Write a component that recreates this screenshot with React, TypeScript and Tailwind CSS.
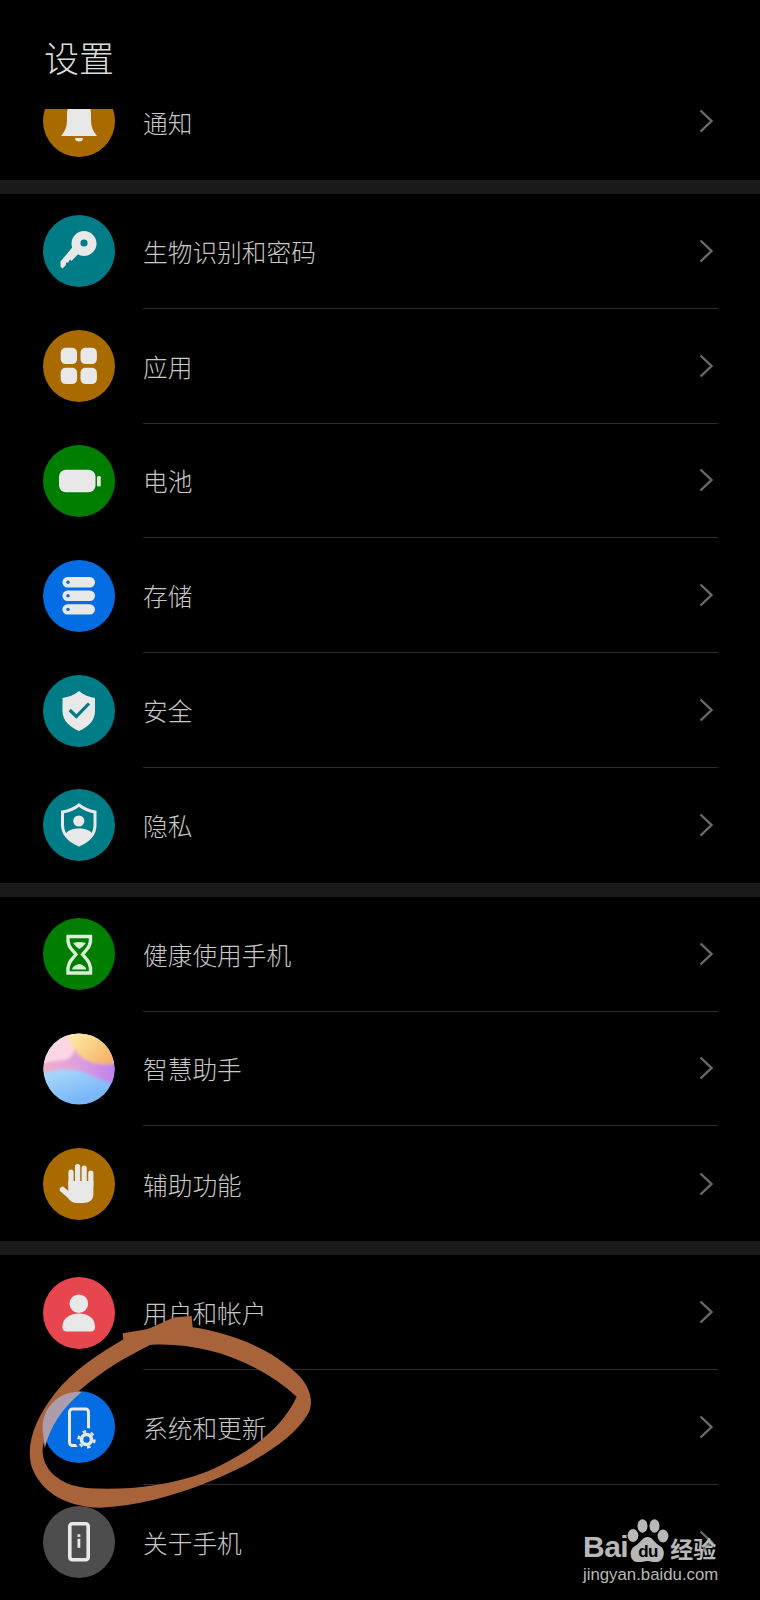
import React from "react";

const ICON = "#e8e8e8";
const TEAL = "#007c87";
const AMBER = "#a96a00";
const GREEN = "#007e00";
const BLUE = "#056de3";

const Svg = ({ children }: { children: React.ReactNode }) => (
  <svg viewBox="0 0 72 72" className="block w-[72px] h-[72px]">
    {children}
  </svg>
);

const Bell = () => (
  <Svg>
    <path fill={ICON} d="M18 51 Q24 44 24 36 V30 Q24 16 36 16 Q48 16 48 30 V36 Q48 44 54 51 Z" />
    <path fill={ICON} d="M32 53 h8 a4 3.5 0 0 1 -8 0 Z" />
  </Svg>
);

const Key = () => (
  <Svg>
    <path fill={ICON} d="M33 28 L39 35 L28.5 46 L27 44.5 L25 48 L23.5 47 L22.5 50.5 L19.5 53.5 L17.5 51.5 L17.5 46.5 Z" />
    <circle cx="41" cy="28.5" r="12.5" fill={ICON} />
    <circle cx="41" cy="28" r="3.6" fill={TEAL} />
  </Svg>
);

const Grid = () => (
  <Svg>
    <rect x="17.7" y="17.7" width="16.4" height="16.4" rx="5" fill={ICON} />
    <rect x="37.5" y="17.7" width="16.4" height="16.4" rx="5" fill={ICON} />
    <rect x="17.7" y="37.7" width="16.4" height="16.4" rx="5" fill={ICON} />
    <rect x="37.5" y="37.7" width="16.4" height="16.4" rx="5" fill={ICON} />
  </Svg>
);

const Battery = () => (
  <Svg>
    <rect x="16" y="24.7" width="36.5" height="22.6" rx="7" fill={ICON} />
    <rect x="54" y="31" width="3.8" height="10.4" rx="1.5" fill={ICON} />
  </Svg>
);

const Storage = () => (
  <Svg>
    {[17, 30.6, 44.2].map((y) => (
      <g key={y}>
        <rect x="19.4" y={y} width="32.6" height="10.4" rx="5.2" fill={ICON} />
        <circle cx="25" cy={y + 5.2} r="1.7" fill={BLUE} />
      </g>
    ))}
  </Svg>
);

const SHIELD = "M36 16 C41 20 46 22 52 23 V36 C52 46 45 52 36 56 C27 52 19.5 46 19.5 36 V23 C26 22 31 20 36 16 Z";

const ShieldCheck = () => (
  <Svg>
    <path d={SHIELD} fill={ICON} />
    <path d="M26.7 35 L33.3 41.5 L46 28.5" fill="none" stroke={TEAL} strokeWidth="3.2" />
  </Svg>
);

const ShieldUser = () => (
  <Svg>
    <path d={SHIELD} fill={TEAL} stroke={ICON} strokeWidth="3" />
    <circle cx="35.8" cy="32" r="5.6" fill={ICON} />
    <path d="M22 46 C24 41 30 39.5 36 39.5 C42 39.5 48 41 50 46 C47 51 42 54 36 56 C30 54 25 51 22 46 Z" fill={ICON} />
  </Svg>
);

const Hourglass = () => (
  <Svg>
    <path
      d="M25 18.5 H47.5 C48.5 28 44 31 39.5 36.5 C44 42 48.5 45 47.5 55 H25 C24 45 28.5 42 33 36.5 C28.5 31 24 28 25 18.5 Z"
      fill="none"
      stroke="#d9f0d9"
      strokeWidth="3.4"
    />
    <path d="M30 25 Q36 23 43 25 Q40 29 36.3 31 Q33 29 30 25 Z" fill="#d9f0d9" />
    <path d="M29 51.5 Q30 47 36.3 46 Q42 47 43.5 51.5 Z" fill="#d9f0d9" />
  </Svg>
);

const Assistant = () => (
  <Svg>
    <defs>
      <clipPath id="orb">
        <circle cx="36" cy="36" r="35.6" />
      </clipPath>
      <filter id="soft" x="-10%" y="-10%" width="120%" height="120%">
        <feGaussianBlur stdDeviation="1.4" />
      </filter>
      <linearGradient id="orbBlue" x1="0" y1="0" x2="0.3" y2="1">
        <stop offset="0.4" stopColor="#b4e0fb" />
        <stop offset="1" stopColor="#7ab6f8" />
      </linearGradient>
      <linearGradient id="orbWave" x1="0" y1="0" x2="1" y2="0">
        <stop offset="0" stopColor="#f2aec8" />
        <stop offset="0.5" stopColor="#dc9fdc" />
        <stop offset="1" stopColor="#bb80f2" />
      </linearGradient>
      <linearGradient id="orbTop" x1="0" y1="0" x2="1" y2="0.7">
        <stop offset="0" stopColor="#fdf2ac" />
        <stop offset="1" stopColor="#f6b268" />
      </linearGradient>
    </defs>
    <g clipPath="url(#orb)">
      <rect width="72" height="72" fill="url(#orbBlue)" />
      <g filter="url(#soft)">
        <path d="M-2 -2 H74 V50 C62 50 52 44 38 38.5 C26 35 12 36 -2 41 Z" fill="url(#orbWave)" />
        <path d="M-2 -2 H34 C34 12 32 24 22 27 C14 28 6 27 -2 32 Z" fill="#fcd6e4" />
        <path d="M24 -2 H74 V30 C62 33 46 31 37 23 C30 16 26 8 24 -2 Z" fill="url(#orbTop)" />
      </g>
    </g>
  </Svg>
);

const Hand = () => (
  <Svg>
    <g stroke={ICON} strokeWidth="5.2" strokeLinecap="round" fill="none">
      <path d="M28 36 V24" />
      <path d="M34.6 36 V18.6" />
      <path d="M41.2 36 V20" />
      <path d="M47.8 38 V25" />
      <path d="M19.5 41.5 L28 49" strokeWidth="5.6" />
    </g>
    <path d="M25.4 33 H50.4 V46 C50.4 52 46 55 40 55 H34 C30 55 27 53 25 50 Z" fill={ICON} />
  </Svg>
);

const User = () => (
  <Svg>
    <circle cx="35.8" cy="26.7" r="9.3" fill={ICON} />
    <path d="M19.4 50 C19.4 41 27 36.5 36 36.5 C45 36.5 52 41 52 50 C52 53 50.5 54.5 47.5 54.5 H24 C21 54.5 19.4 53 19.4 50 Z" fill={ICON} />
  </Svg>
);

const PhoneGear = () => (
  <Svg>
    <rect x="26.5" y="18" width="19" height="36.5" rx="3" fill="none" stroke={ICON} strokeWidth="3" />
    <circle cx="43.5" cy="48.5" r="11.5" fill={BLUE} />
    <circle cx="43.5" cy="48.5" r="5" fill="none" stroke={ICON} strokeWidth="3.6" />
    <circle cx="43.5" cy="48.5" r="8" fill="none" stroke={ICON} strokeWidth="2.4" strokeDasharray="3.6 4.78" />
  </Svg>
);

const PhoneInfo = () => (
  <Svg>
    <rect x="26.8" y="17.8" width="18.4" height="36" rx="2.5" fill="none" stroke={ICON} strokeWidth="3.6" />
    <rect x="34.5" y="28.3" width="2.8" height="2.6" fill={ICON} />
    <rect x="34.5" y="32.8" width="2.8" height="9" fill={ICON} />
  </Svg>
);

const Chevron = () => (
  <svg viewBox="0 0 14 24" className="block w-[14px] h-[24px]">
    <path d="M1.5 1.5 L12.5 12 L1.5 22.5" fill="none" stroke="#6a6a6a" strokeWidth="2.4" />
  </svg>
);

type RowProps = {
  label: string;
  color: string;
  icon: React.ReactNode;
  last?: boolean;
};

const Row: React.FC<RowProps> = ({ label, color, icon, last }) => (
  <div className="flex items-center h-[114.8px] pl-[43px]">
    <div className="w-[72px] h-[72px] rounded-full shrink-0" style={{ backgroundColor: color }}>
      {icon}
    </div>
    <div
      className={`flex-1 self-stretch ml-[28px] mr-[42px] flex items-center justify-between pr-[5px] ${
        last ? "" : "border-b border-[#2c2c2c]"
      }`}
    >
      <span className="text-[24.7px] leading-[32px] font-light text-[#c8c8c8]">{label}</span>
      <Chevron />
    </div>
  </div>
);

const Gap = () => <div className="h-[14px] bg-[#1a1a1a]" />;

// hand-drawn ring somebody put on top of the screenshot
const Annotation = () => (
  <svg viewBox="0 0 1140 1080" className="absolute left-0 top-[1240px] w-[380px] h-[360px]">
    <path
      fill="#a9633a"
      fillRule="evenodd"
      d="M575 228 L578 262 C700 280 820 330 900 410 C935 450 940 490 925 520 C880 600 760 670 640 720 C520 770 400 800 300 803 C190 800 120 750 95 680 C75 610 110 530 165 460 C220 390 300 340 370 298 L368 280 L440 268 C470 258 500 240 525 232 Z M450 315 C600 305 770 360 890 470 C850 560 750 640 620 695 C500 740 380 750 270 745 C190 740 135 700 128 640 C125 590 170 510 240 450 C310 390 380 350 450 315 Z"
    />
    <path fill="#ad9cab" d="M245 456 A107 107 0 0 0 130 585 L134 625 C150 560 190 500 245 456 Z" />
  </svg>
);

const Watermark = () => (
  <div className="absolute left-[583px] top-[1517px] w-[140px] text-[#b8b8b8]">
    <div className="flex items-end h-[47px]">
      <span className="font-['Liberation_Sans',sans-serif] font-bold text-[30px] leading-[30px] tracking-[-0.5px] mb-[2px]">
        Bai
      </span>
      <div className="relative w-[42px] h-[46px] -ml-[1px] shrink-0">
        <svg viewBox="0 0 42 46" className="block w-[42px] h-[46px]">
          <ellipse cx="6" cy="17.5" rx="5.4" ry="6.4" fill="#b8b8b8" />
          <ellipse cx="15.5" cy="8" rx="5" ry="6.8" fill="#b8b8b8" />
          <ellipse cx="27.5" cy="8" rx="5" ry="6.8" fill="#b8b8b8" />
          <ellipse cx="36" cy="18" rx="5.4" ry="6.4" fill="#b8b8b8" />
          <path d="M20.5 19 C26 19 27 25 33 28 C39 31 38 43 30 44 C25 44.5 23 43 20.5 43 C18 43 15 44.5 10 44 C2 43 2 31 8 28 C14 25 15 19 20.5 19 Z" fill="#b8b8b8" />
        </svg>
        <span className="absolute left-[11px] top-[25px] font-['Liberation_Sans',sans-serif] font-bold text-[17px] leading-[17px] tracking-[-0.5px] text-black">
          du
        </span>
      </div>
      <span className="font-bold text-[23px] leading-[26px] mb-[3px] ml-[1px] whitespace-nowrap">经验</span>
    </div>
    <div className="font-['Liberation_Sans',sans-serif] text-[16.8px] leading-[20px] mt-[1px] whitespace-nowrap">
      jingyan.baidu.com
    </div>
  </div>
);

export default function App() {
  return (
    <div className="relative h-[1600px] w-[760px] overflow-hidden bg-black font-['Noto_Sans_CJK_SC','Noto_Sans',sans-serif]">
      <header className="h-[109px] pl-[44px] pt-[35px]">
        <h1 className="text-[35px] leading-[44px] font-light text-[#dcdcdc]">设置</h1>
      </header>

      {/* list is scrolled under the title, only the circle gets cut */}
      <section className="h-[71px] flex items-end pl-[43px] pb-[23px]">
        <div className="h-[48px] w-[72px] overflow-hidden shrink-0">
          <div className="-mt-[24px] w-[72px] h-[72px] rounded-full" style={{ backgroundColor: AMBER }}>
            <Bell />
          </div>
        </div>
        <div className="flex-1 h-[48px] ml-[28px] mr-[42px] pr-[5px] flex items-center justify-between">
          <span className="text-[24.7px] leading-[32px] font-light text-[#c8c8c8] -mt-[23px]">通知</span>
          <div className="-mt-[24px]">
            <Chevron />
          </div>
        </div>
      </section>
      <Gap />

      <section>
        <Row label="生物识别和密码" color={TEAL} icon={<Key />} />
        <Row label="应用" color={AMBER} icon={<Grid />} />
        <Row label="电池" color={GREEN} icon={<Battery />} />
        <Row label="存储" color={BLUE} icon={<Storage />} />
        <Row label="安全" color={TEAL} icon={<ShieldCheck />} />
        <Row label="隐私" color={TEAL} icon={<ShieldUser />} last />
      </section>
      <Gap />

      <section>
        <Row label="健康使用手机" color={GREEN} icon={<Hourglass />} />
        <Row label="智慧助手" color="transparent" icon={<Assistant />} />
        <Row label="辅助功能" color={AMBER} icon={<Hand />} last />
      </section>
      <Gap />

      <section>
        <Row label="用户和帐户" color="#e8464f" icon={<User />} />
        <Row label="系统和更新" color={BLUE} icon={<PhoneGear />} />
        <Row label="关于手机" color="#4d4d4d" icon={<PhoneInfo />} last />
      </section>

      <Annotation />
      <Watermark />
    </div>
  );
}
